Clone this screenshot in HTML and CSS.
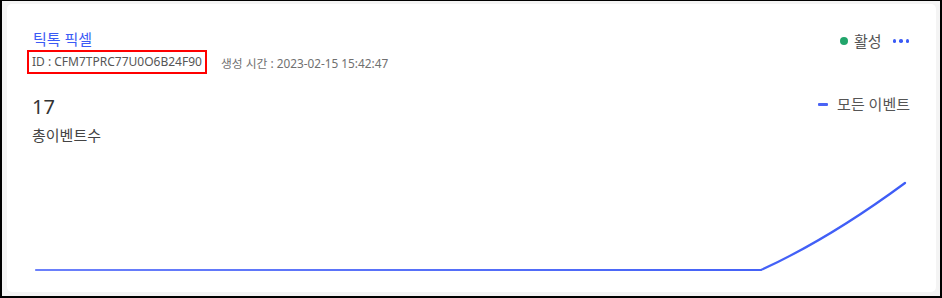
FILE: index.html
```html
<!DOCTYPE html>
<html lang="ko">
<head>
<meta charset="utf-8">
<link rel="stylesheet" href="styles.css">
</head>
<body>
<div class="frame">
  <div class="card">
    <div class="head">
      <div class="head-left">
        <div class="title">틱톡 픽셀</div>
        <div class="meta">
          <span class="id-box">ID : CFM7TPRC77U0O6B24F90</span>
          <span class="created">생성 시간 : 2023-02-15 15:42:47</span>
        </div>
      </div>
      <div class="head-right">
        <span class="dot"></span>
        <span class="status">활성</span>
        <span class="more"><i></i><i></i><i></i></span>
      </div>
    </div>
    <div class="stats">
      <div>
        <div class="count">17</div>
        <div class="count-label">총이벤트수</div>
      </div>
      <div class="legend"><span class="legend-line"></span>모든 이벤트</div>
    </div>
    <svg class="chart" width="920" height="140" viewBox="0 0 920 140">
      <defs>
        <linearGradient id="g" x1="0" y1="0" x2="1" y2="0">
          <stop offset="0" stop-color="#6b80fb"/>
          <stop offset="1" stop-color="#3d5cf6"/>
        </linearGradient>
      </defs>
      <path d="M29 124 H754 Q822 93 898 37" fill="none" stroke="url(#g)" stroke-width="2.2" stroke-linecap="round"/>
    </svg>
  </div>
</div>
</body>
</html>
```
FILE: styles.css
```css
html, body { margin: 0; padding: 0; }
body {
  width: 942px;
  height: 298px;
  font-family: "Noto Sans", "Noto Sans CJK KR", sans-serif;
  overflow: hidden;
}
.frame {
  box-sizing: border-box;
  width: 942px;
  height: 298px;
  border: 2px solid #000;
  border-top-width: 1px;
  background: #f4f4f4;
  padding: 3px 4px 4px 5px;
}
.card {
  box-sizing: border-box;
  height: 100%;
  background: #fff;
  border-radius: 5px;
  padding: 25px 27px 0 9px;
  position: relative;
}
.head {
  display: flex;
  justify-content: space-between;
  align-items: flex-start;
}
.title {
  color: #3b5bf5;
  font-size: 15px;
  line-height: 20px;
  padding-left: 17px;
}
.meta {
  display: flex;
  align-items: center;
  margin-top: 1px;
  font-size: 12px;
  color: #555;
}
.id-box {
  border: 2px solid #f00;
  padding: 2px 3px;
  line-height: 16px;
  margin-left: 11px;
}
.created {
  margin-left: 14px;
  font-size: 11.8px;
  color: #707070;
}
.head-right {
  display: flex;
  align-items: center;
  margin-top: 2px;
}
.dot {
  width: 8px; height: 8px;
  border-radius: 50%;
  background: #21a56b;
  margin-right: 6px;
}
.status { font-size: 15px; color: #555; line-height: 20px; }
.more {
  display: flex;
  gap: 3px;
  margin-left: 11px;
}
.more i {
  width: 3.5px; height: 3.5px;
  border-radius: 50%;
  background: #3b5bf5;
}
.stats {
  display: flex;
  justify-content: space-between;
  align-items: flex-start;
  margin-top: 20px;
  padding-left: 16px;
}
.count {
  font-size: 20px;
  color: #333;
  line-height: 26px;
}
.count-label {
  font-size: 15px;
  color: #444;
  margin-top: 5px;
  line-height: 20px;
}
.legend {
  display: flex;
  align-items: center;
  font-size: 15px;
  color: #555;
  line-height: 20px;
  margin-right: -1px;
}
.legend-line {
  width: 10px; height: 3px;
  background: #4a63f5;
  border-radius: 1px;
  margin-right: 9px;
}
.chart {
  display: block;
  position: absolute;
  left: 0;
  top: 142px;
}
```
